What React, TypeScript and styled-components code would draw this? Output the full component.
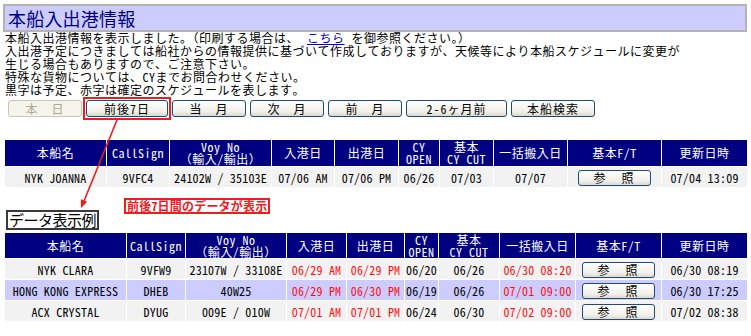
import React from 'react';
import styled, { createGlobalStyle } from 'styled-components';

const GlobalStyle = createGlobalStyle`
    body {
        margin: 0;
        background: #fff;
        color: #000;
        font-family: 'Noto Sans Mono CJK JP', 'Noto Sans CJK JP', monospace;
        font-size: 12px;
    }
`;

const Page = styled.div`
    position: relative;
    width: 751px;
    padding: 4px 4px 0 3px;
    box-sizing: border-box;
`;

const TitleBar = styled.h1`
    margin: 0;
    height: 28px;
    box-sizing: border-box;
    border: 2px solid #b4b4b4;
    background: #ccccff;
    color: #000080;
    font-size: 18px;
    font-weight: normal;
    line-height: 24px;
    padding-left: 3px;
    letter-spacing: 0.2px;
`;

const Notice = styled.div`
    margin: -1px 0 0 2px;
    line-height: 13px;
    letter-spacing: 0.5px;
    white-space: nowrap;
`;

const TextLink = styled.a`
    color: #0000cc;
    text-decoration: underline;
    margin: 0 7px 0 8px;
`;

const ButtonRow = styled.div`
    display: flex;
    gap: 4px;
    margin: 4px 0 0 5px;
    height: 17px;
`;

type BtnProps = { $w: number; $disabled?: boolean };

const NavButton = styled.button<BtnProps>`
    width: ${(p) => p.$w}px;
    height: 17px;
    padding: 0;
    font-family: inherit;
    font-size: 12px;
    line-height: 14px;
    letter-spacing: 1px;
    border-radius: 3px;
    border: 1px solid ${(p) => (p.$disabled ? '#c9c7ba' : '#1f4a7a')};
    color: ${(p) => (p.$disabled ? '#aca899' : '#000')};
    background: ${(p) =>
        p.$disabled ? '#f5f4ea' : 'linear-gradient(#ffffff, #f1f0ea 70%, #dcd8cc)'};
`;

const Highlight = styled.span`
    display: flex;
    outline: 2px solid #ee1c1c;
    outline-offset: 1px;
`;

const Table = styled.table<{ $top: number }>`
    margin: ${(p) => p.$top}px 0 0 1px;
    width: 744px;
    table-layout: fixed;
    border-collapse: separate;
    border-spacing: 1px;
    background: #fff;
`;

const HeadCell = styled.th<{ $h: number }>`
    background: #000080;
    color: #fff;
    font-weight: normal;
    font-size: 12px;
    line-height: 12px;
    letter-spacing: 0.5px;
    height: ${(p) => p.$h}px;
    padding: 0;
    text-align: center;
    white-space: nowrap;
`;

const Cell = styled.td<{ $alt?: boolean; $red?: boolean }>`
    background: ${(p) => (p.$alt ? '#ccccff' : '#f2f2f2')};
    color: ${(p) => (p.$red ? '#ff1010' : '#000')};
    height: 20px;
    padding: 0;
    text-align: center;
    white-space: nowrap;
    letter-spacing: 0.2px;
    font-size: 12px;
`;

const RefButton = styled.button`
    width: 73px;
    height: 16px;
    padding: 0;
    font-family: inherit;
    font-size: 12px;
    line-height: 12px;
    letter-spacing: 2px;
    border: 1px solid #1f4a7a;
    border-radius: 3px;
    background: linear-gradient(#ffffff, #f1f0ea 70%, #dcd8cc);
    color: #000;
    vertical-align: middle;
`;

const NoteRow = styled.div`
    display: flex;
    align-items: flex-start;
    margin: 10px 0 0 3px;
`;

const ExampleBox = styled.div`
    margin-top: 12px;
    border: 2px solid #3a3a3a;
    height: 20px;
    box-sizing: border-box;
    padding: 0 1px;
    font-family: 'Noto Sans CJK JP', sans-serif;
    font-size: 15px;
    line-height: 16px;
    letter-spacing: -0.5px;
`;

const RedLabel = styled.div`
    margin-left: 25px;
    border: 2px solid #ee1c1c;
    padding: 0 1px;
    height: 16px;
    box-sizing: border-box;
    color: #ee1c1c;
    font-weight: bold;
    font-size: 12px;
    line-height: 12px;
    letter-spacing: 0.2px;
`;

const ArrowLayer = styled.svg`
    position: absolute;
    left: 0;
    top: 0;
    pointer-events: none;
`;

type Row = {
    name: string;
    call: string;
    voy: string;
    arr: string;
    dep: string;
    open: string;
    cut: string;
    bulk: string;
    upd: string;
    red?: boolean;
};

const firstRows: Row[] = [
    {
        name: 'NYK JOANNA',
        call: '9VFC4',
        voy: '24102W / 35103E',
        arr: '07/06 AM',
        dep: '07/06 PM',
        open: '06/26',
        cut: '07/03',
        bulk: '07/07',
        upd: '07/04 13:09',
    },
];

const exampleRows: Row[] = [
    {
        name: 'NYK CLARA',
        call: '9VFW9',
        voy: '23107W / 33108E',
        arr: '06/29 AM',
        dep: '06/29 PM',
        open: '06/20',
        cut: '06/26',
        bulk: '06/30 08:20',
        upd: '06/30 08:19',
        red: true,
    },
    {
        name: 'HONG KONG EXPRESS',
        call: 'DHEB',
        voy: '40W25',
        arr: '06/29 PM',
        dep: '06/30 PM',
        open: '06/19',
        cut: '06/26',
        bulk: '07/01 09:00',
        upd: '06/30 17:25',
        red: true,
    },
    {
        name: 'ACX CRYSTAL',
        call: 'DYUG',
        voy: '009E / 010W',
        arr: '07/01 AM',
        dep: '07/01 PM',
        open: '06/24',
        cut: '06/30',
        bulk: '07/02 09:00',
        upd: '07/02 08:38',
        red: true,
    },
];

function ScheduleTable({
    cols,
    headH,
    rows,
    top,
}: {
    cols: number[];
    headH: number;
    rows: Row[];
    top: number;
}) {
    return (
        <Table $top={top}>
            <colgroup>
                {cols.map((w, i) => (
                    <col key={i} style={{ width: w }} />
                ))}
            </colgroup>
            <thead>
                <tr>
                    <HeadCell $h={headH}>本船名</HeadCell>
                    <HeadCell $h={headH}>CallSign</HeadCell>
                    <HeadCell $h={headH}>
                        Voy No
                        <br />
                        （輸入/輸出）
                    </HeadCell>
                    <HeadCell $h={headH}>入港日</HeadCell>
                    <HeadCell $h={headH}>出港日</HeadCell>
                    <HeadCell $h={headH}>
                        CY
                        <br />
                        OPEN
                    </HeadCell>
                    <HeadCell $h={headH}>
                        基本
                        <br />
                        CY CUT
                    </HeadCell>
                    <HeadCell $h={headH}>一括搬入日</HeadCell>
                    <HeadCell $h={headH}>基本F/T</HeadCell>
                    <HeadCell $h={headH}>更新日時</HeadCell>
                </tr>
            </thead>
            <tbody>
                {rows.map((r, i) => {
                    const alt = i % 2 === 1;
                    return (
                        <tr key={r.name}>
                            <Cell $alt={alt}>{r.name}</Cell>
                            <Cell $alt={alt}>{r.call}</Cell>
                            <Cell $alt={alt}>{r.voy}</Cell>
                            <Cell $alt={alt} $red={r.red}>
                                {r.arr}
                            </Cell>
                            <Cell $alt={alt} $red={r.red}>
                                {r.dep}
                            </Cell>
                            <Cell $alt={alt}>{r.open}</Cell>
                            <Cell $alt={alt}>{r.cut}</Cell>
                            <Cell $alt={alt} $red={r.red}>
                                {r.bulk}
                            </Cell>
                            <Cell $alt={alt}>
                                <RefButton>参　照</RefButton>
                            </Cell>
                            <Cell $alt={alt}>{r.upd}</Cell>
                        </tr>
                    );
                })}
            </tbody>
        </Table>
    );
}

export default function App(): JSX.Element {
    return (
        <Page>
            <GlobalStyle />
            <TitleBar>本船入出港情報</TitleBar>
            <Notice>
                本船入出港情報を表示しました。（印刷する場合は、
                <TextLink href="#">こちら</TextLink>を御参照ください。）
                <br />
                入出港予定につきましては船社からの情報提供に基づいて作成しておりますが、天候等により本船スケジュールに変更が
                <br />
                生じる場合もありますので、ご注意下さい。
                <br />
                特殊な貨物については、CYまでお問合わせください。
                <br />
                黒字は予定、赤字は確定のスケジュールを表します。
            </Notice>
            <ButtonRow>
                <NavButton $w={74} $disabled>
                    本　日
                </NavButton>
                <Highlight>
                    <NavButton $w={82}>前後7日</NavButton>
                </Highlight>
                <NavButton $w={74}>当　月</NavButton>
                <NavButton $w={74}>次　月</NavButton>
                <NavButton $w={74}>前　月</NavButton>
                <NavButton $w={101}>2-6ヶ月前</NavButton>
                <NavButton $w={84}>本船検索</NavButton>
            </ButtonRow>
            <ScheduleTable
                top={22}
                headH={26}
                rows={firstRows}
                cols={[101, 62, 101, 62, 63, 40, 53, 73, 93, 85]}
            />
            <NoteRow>
                <ExampleBox>データ表示例</ExampleBox>
                <RedLabel>前後7日間のデータが表示</RedLabel>
            </NoteRow>
            <ScheduleTable
                top={2}
                headH={25}
                rows={exampleRows}
                cols={[121, 58, 100, 59, 57, 33, 60, 75, 85, 85]}
            />
            <ArrowLayer width="751" height="336">
                <line x1="117" y1="120" x2="84" y2="201" stroke="#ee1c1c" strokeWidth="1.6" />
                <polygon points="81,208 87.2,201.8 80.8,199.2" fill="#ee1c1c" />
            </ArrowLayer>
        </Page>
    );
}
